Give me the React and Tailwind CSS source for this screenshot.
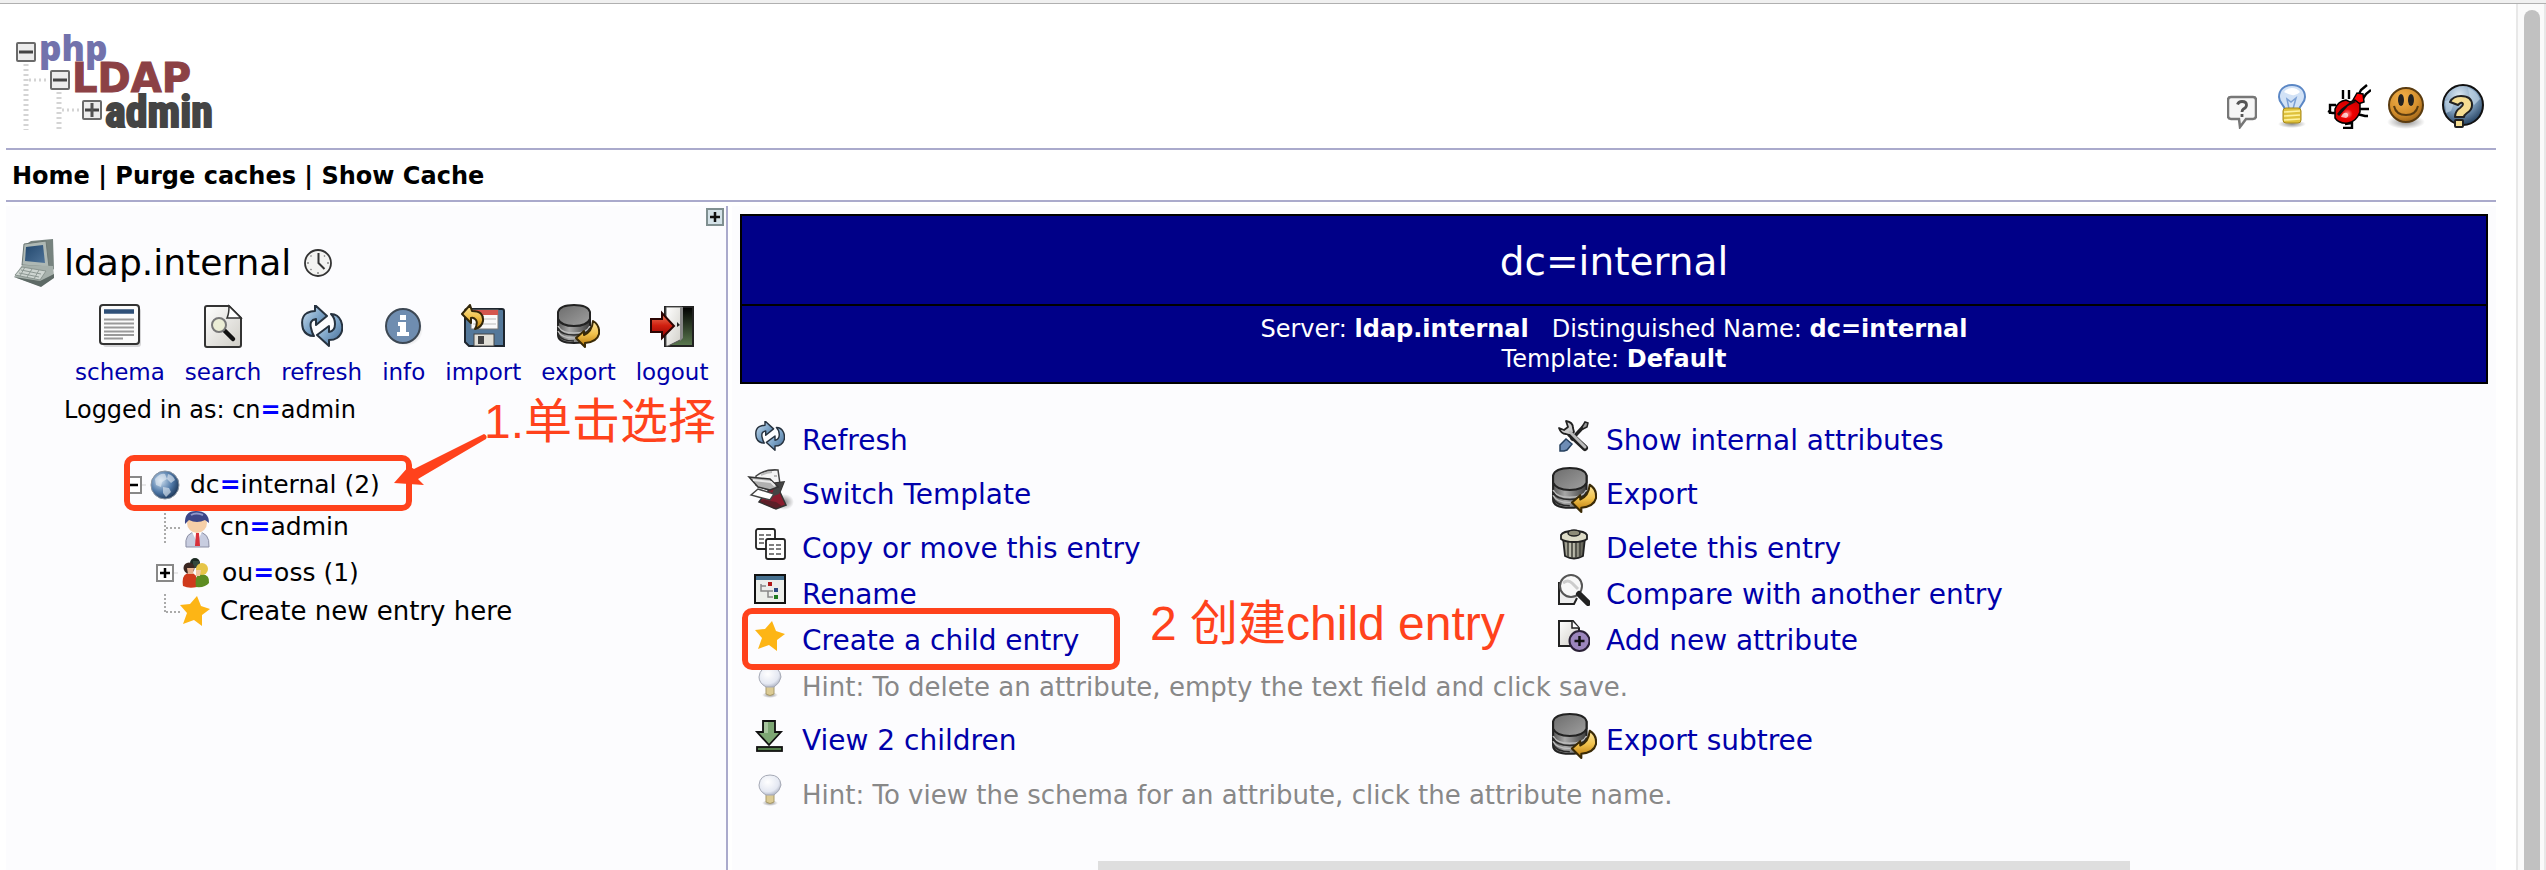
import React from 'react';

const LINK = 'text-[#0000aa]';

function Defs() {
  return (
    <svg className="absolute h-0 w-0" aria-hidden="true">
      <defs>
        <linearGradient id="steel" x1="0" y1="0" x2="1" y2="1">
          <stop offset="0" stopColor="#d3e4f2" />
          <stop offset="0.5" stopColor="#7fa6c9" />
          <stop offset="1" stopColor="#3f6690" />
        </linearGradient>
        <linearGradient id="gold" x1="0" y1="0" x2="0" y2="1">
          <stop offset="0" stopColor="#fbe6a0" />
          <stop offset="0.5" stopColor="#f1c24c" />
          <stop offset="1" stopColor="#b87608" />
        </linearGradient>
        <linearGradient id="drum" x1="0" y1="0" x2="1" y2="0">
          <stop offset="0" stopColor="#555" />
          <stop offset="0.35" stopColor="#a8a8a8" />
          <stop offset="1" stopColor="#3c3c3c" />
        </linearGradient>
        <linearGradient id="lid" x1="0" y1="0" x2="1" y2="1">
          <stop offset="0" stopColor="#6c6c6c" />
          <stop offset="1" stopColor="#a0a0a0" />
        </linearGradient>
        <linearGradient id="paper" x1="0" y1="0" x2="1" y2="1">
          <stop offset="0" stopColor="#ffffff" />
          <stop offset="1" stopColor="#cfcdc6" />
        </linearGradient>
        <linearGradient id="red" x1="0" y1="0" x2="0" y2="1">
          <stop offset="0" stopColor="#f08060" />
          <stop offset="0.5" stopColor="#d02010" />
          <stop offset="1" stopColor="#900000" />
        </linearGradient>
        <linearGradient id="room" x1="0" y1="0" x2="0" y2="1">
          <stop offset="0" stopColor="#000" />
          <stop offset="1" stopColor="#5c7a50" />
        </linearGradient>
        <linearGradient id="screen" x1="0" y1="0" x2="1" y2="1">
          <stop offset="0" stopColor="#23486e" />
          <stop offset="1" stopColor="#4f7398" />
        </linearGradient>
        <linearGradient id="metal" x1="0" y1="0" x2="1" y2="0">
          <stop offset="0" stopColor="#8a8a7c" />
          <stop offset="0.4" stopColor="#c8c8b8" />
          <stop offset="1" stopColor="#4a4a40" />
        </linearGradient>
        <radialGradient id="globe" cx="0.35" cy="0.35" r="0.75">
          <stop offset="0" stopColor="#cfe0f0" />
          <stop offset="0.55" stopColor="#5079a8" />
          <stop offset="1" stopColor="#142c4c" />
        </radialGradient>
        <radialGradient id="orb" cx="0.4" cy="0.25" r="0.85">
          <stop offset="0" stopColor="#dbe8f2" />
          <stop offset="0.5" stopColor="#7f9fbd" />
          <stop offset="1" stopColor="#0e2a4a" />
        </radialGradient>
        <radialGradient id="smile" cx="0.4" cy="0.3" r="0.8">
          <stop offset="0" stopColor="#f4b14a" />
          <stop offset="0.6" stopColor="#d38e2c" />
          <stop offset="1" stopColor="#8c5510" />
        </radialGradient>
        <radialGradient id="shade" cx="0.5" cy="0.5" r="0.5">
          <stop offset="0" stopColor="#000" stopOpacity="0.45" />
          <stop offset="1" stopColor="#000" stopOpacity="0" />
        </radialGradient>
        <radialGradient id="glass" cx="0.4" cy="0.35" r="0.7">
          <stop offset="0" stopColor="#ffffff" />
          <stop offset="0.7" stopColor="#e4e8f2" />
          <stop offset="1" stopColor="#aab0c0" />
        </radialGradient>
        <radialGradient id="bug" cx="0.5" cy="0.6" r="0.6">
          <stop offset="0" stopColor="#ff8080" />
          <stop offset="0.35" stopColor="#f00000" />
          <stop offset="1" stopColor="#d00000" />
        </radialGradient>
      </defs>
    </svg>
  );
}

function Logo() {
  const box = (x, y, plus) => (
    <g>
      <rect x={x} y={y} width="18" height="18" rx="1" fill="#ececec" stroke="#6a6a6a" strokeWidth="2" />
      <path d={`M${x + 2} ${y + 9}h14`} stroke="#444" strokeWidth="3" />
      {plus && <path d={`M${x + 9} ${y + 2}v14`} stroke="#555" strokeWidth="3" />}
    </g>
  );
  return (
    <svg width="210" height="126" viewBox="0 -14 210 126" role="img" aria-label="phpLDAPadmin">
      <g stroke="#d4d4d4" fill="none">
        <path d="M15 32v66M48 60v38" strokeWidth="5" strokeDasharray="2 3" />
        <path d="M18 48h20M51 78h18" strokeWidth="3" strokeDasharray="2 3" />
      </g>
      <text x="28" y="29" fontFamily="Open Sans, sans-serif" fontWeight="800" fontSize="35" fill="#7272ac">php</text>
      <text x="61" y="60" fontFamily="DejaVu Sans, sans-serif" fontWeight="700" fontSize="40" fill="#8c4145" stroke="#8c4145">LDAP</text>
      <text x="94" y="95" fontFamily="Liberation Sans Narrow, Roboto Condensed, DejaVu Sans Condensed, sans-serif" fontWeight="700" fontSize="44" fill="#444" stroke="#444" strokeWidth="2">admin</text>
      {box(6, 11)}
      {box(40, 39)}
      {box(72, 69, true)}
    </svg>
  );
}

const BubbleIcon = () => (
  <svg width="30" height="34" viewBox="0 0 30 34">
    <path d="M4 2h22q3 0 3 3v16q0 3-3 3h-7l-6 8-1-8H4q-3 0-3-3V5q0-3 3-3z" fill="#f6f6f6" stroke="#777" strokeWidth="2.500" />
    <path d="M10.500 9.500q1-3 4.500-3 4.500 0 4.500 3.500 0 2.500-3 4-1.500 1-1.500 3M15 19v3" fill="none" stroke="#555" strokeWidth="2.800" />
  </svg>
);
const LightIcon = () => (
  <svg width="38" height="46" viewBox="0 0 38 46">
    <ellipse cx="19" cy="41" rx="14" ry="4" fill="url(#shade)" />
    <path d="M19 2C11 2 6 7 6 14c0 6 5 7 6 13h14c1-6 6-7 6-13 0-7-5-12-13-12z" fill="#d2e2f6" stroke="#5b87c5" strokeWidth="2" />
    <path d="M11 9q3-4 8-4t8 4q-4 4-8 3t-8-3z" fill="#fff" />
    <path d="M16 26l-2-10 4 3 5-4-3 11" fill="none" stroke="#7b9fd4" strokeWidth="1.500" />
    <rect x="10" y="25" width="18" height="15" rx="3" fill="#dfc23c" stroke="#a5871a" />
    <path d="M11 29l16-1M11 33l16-1M11 37l16-1" stroke="#fff3a0" strokeWidth="1.500" />
  </svg>
);
const BugIcon = () => (
  <svg width="44" height="46" viewBox="0 0 44 46">
    <g stroke="#000" strokeWidth="2.400" fill="none">
      <path d="M31 13l3-6 6-5M35 17l4-6 5-4M22 16V7M16 16V7M9 22H3v9M10 30H5l-4-2M32 26h10M30 31l8 2h3M18 41l7-1v5h-9" />
    </g>
    <path d="M26 17l4-7 6 1 1 8-6 2-6 4z" fill="#f00" stroke="#000" strokeWidth="1.500" />
    <path d="M8 26q3-8 11-9l4 2 5-2 5 4v8q-4 10-12 11-9 1-13-5z" fill="url(#bug)" stroke="#000" strokeWidth="1.500" />
    <path d="M10 31l4-5L26 17l3 2-8 4-9 10z" fill="#111" />
    <path d="M14 34q2-5 6-4 3 3-1 5z" fill="#fff" opacity="0.7" />
  </svg>
);
const SmileIcon = () => (
  <svg width="38" height="43" viewBox="0 0 38 43">
    <ellipse cx="19" cy="36" rx="19" ry="7" fill="url(#shade)" />
    <circle cx="19" cy="19" r="17" fill="url(#smile)" stroke="#5b3c10" strokeWidth="2" />
    <ellipse cx="14" cy="14" rx="3" ry="6" fill="#222" />
    <ellipse cx="24" cy="14" rx="3" ry="6" fill="#222" />
    <path d="M7 20q2 9 12 9t12-9" fill="none" stroke="#5b3c10" strokeWidth="2" />
  </svg>
);
const HelpIcon = () => (
  <svg width="44" height="46" viewBox="0 0 44 46">
    <circle cx="22" cy="22" r="20" fill="url(#orb)" stroke="#111" strokeWidth="2" />
    <path d="M27 5q9 3 12 11l-6 6-4-6zM4 18q6-2 9 2l-3 8-5 2z" fill="#c7dae9" opacity="0.6" />
    <path d="M9 19q3-6 11-6 11 0 11 9 0 5-5 8-3 2-3 4h-9q0-6 5-9 3-2 3-4-1-3-5 1z" fill="#f5dd92" stroke="#222" strokeWidth="2" strokeLinejoin="round" />
    <rect x="14" y="37" width="8" height="7" rx="1" fill="#f5dd92" stroke="#222" strokeWidth="2" />
  </svg>
);

const ComputerIcon = () => (
  <svg width="42" height="48" viewBox="0 0 42 48">
    <path d="M12 6l6-4 22-2 1 30-6 5z" fill="#77837f" />
    <path d="M11 5l22-3 3 26-27-2z" fill="#aeb8b4" stroke="#6d7875" />
    <path d="M13 8l17-2 2 18-20-2z" fill="url(#screen)" />
    <path d="M9 26l31 1 1 10-14 10L1 38z" fill="#a6b0ab" />
    <path d="M9 28l24 4-6 9L2 36z" fill="#cdd4d0" stroke="#8a9590" />
    <path d="M8 31l20 4M6 34l20 4M12 28l-5 9M19 30l-5 8M26 31l-5 9" stroke="#8d9893" fill="none" />
    <path d="M1 38l26 4 14-7v4L28 48z" fill="#5e6a66" />
  </svg>
);
const ClockIcon = () => (
  <svg width="28" height="28" viewBox="0 0 28 28">
    <circle cx="14" cy="14" r="13" fill="#f3f3f1" stroke="#333" strokeWidth="1.800" />
    <path d="M14.500 4v10l6 6" fill="none" stroke="#333" strokeWidth="2" />
    <path d="M14 23v2M3 14h2M23 14h2M6.500 6.500l1 1M21 6.500l-1 1M6.500 21l1-1" stroke="#888" strokeWidth="1.500" />
  </svg>
);

const SchemaIcon = () => (
  <svg width="42" height="44" viewBox="0 0 42 44">
    <rect x="4" y="4" width="38" height="39" rx="3" fill="#000" opacity="0.15" />
    <rect x="1" y="1" width="39" height="39" rx="3" fill="#fbfbfb" stroke="#333" strokeWidth="2" />
    <path d="M5 7.500h30" stroke="#2f5078" strokeWidth="4.500" />
    <path d="M5 15.500h30M5 19.500h30M5 23.500h30M5 27.500h30M5 31h30M5 34.500h19" stroke="#999" strokeWidth="1.800" />
  </svg>
);
const SearchIcon = () => (
  <svg width="42" height="44" viewBox="0 0 42 44">
    <path d="M5 2h22l12 12v27q0 2-2 2H5q-2 0-2-2V4q0-2 2-2z" fill="url(#paper)" stroke="#333" strokeWidth="2" />
    <path d="M27 2q0 8-2 12h14z" fill="#fff" stroke="#333" strokeWidth="1.500" />
    <path d="M22 26l9 9" stroke="#111" strokeWidth="4.500" strokeLinecap="round" />
    <circle cx="17" cy="21" r="7" fill="#ebedd5" stroke="#777" strokeWidth="2" />
  </svg>
);
const RefreshIcon = ({ size = 42 }) => (
  <svg width={size} height={size} viewBox="0 0 42 42">
    <path d="M14 0l12 11-11 9v-6q-7 1-5 9 1 5 3 8-8 0-11-7Q-1 12 6 8q4-2 8-2z" fill="url(#steel)" stroke="#26323f" strokeWidth="2" strokeLinejoin="round" />
    <path d="M28 41L16 30l12-9v6q6-1 6-8 0-6-4-10 7 0 10 7 4 11-4 17-3 2-8 2z" fill="url(#steel)" stroke="#26323f" strokeWidth="2" strokeLinejoin="round" />
  </svg>
);
const InfoIcon = () => (
  <svg width="38" height="44" viewBox="0 0 38 44">
    <ellipse cx="21" cy="26" rx="17" ry="16" fill="url(#shade)" />
    <circle cx="18" cy="22" r="17" fill="#6f8db0" stroke="#3d4854" strokeWidth="2" />
    <path d="M15 11h6v5h-6zM13 18h8v10h3v4H12v-4h3v-6h-2z" fill="#fff" />
  </svg>
);
const ImportIcon = () => (
  <svg width="44" height="44" viewBox="0 0 44 44">
    <path d="M6 5h35q2 0 2 2v35H8l-4-4V7q0-2 2-2z" fill="#54789a" stroke="#1d252e" strokeWidth="2" />
    <rect x="10" y="6" width="27" height="19" fill="#fafafa" stroke="#777" />
    <path d="M10 8.500h27" stroke="#d4574f" strokeWidth="5" />
    <path d="M12 15h23M12 20h23" stroke="#bbb" />
    <rect x="13" y="30" width="20" height="12" fill="#e2e0d8" stroke="#444" />
    <rect x="17" y="32" width="6" height="8" fill="#444" />
    <path d="M1 10L9 1l2 6q12 0 11 10-1 6-8 8 3-6 1-9t-5-2v5z" fill="url(#gold)" stroke="#33270a" strokeWidth="2" strokeLinejoin="round" />
  </svg>
);
const ExportIcon = ({ size = 44 }) => (
  <svg width={size} height={size} viewBox="0 0 44 44">
    <path d="M2 9v22q0 8 16 8t16-8V9z" fill="url(#drum)" stroke="#222" strokeWidth="2" />
    <path d="M2 22q3 7 16 7t16-7M2 27q3 7 16 7t16-7" fill="none" stroke="#bdbdbd" strokeWidth="1.500" />
    <path d="M2 24q3 7 16 7t16-7M2 30q3 7 16 7" fill="none" stroke="#2a2a2a" strokeWidth="1.500" />
    <path d="M2 8q2-7 16-7t16 7v7q-3 7-16 7T2 15z" fill="url(#lid)" stroke="#222" strokeWidth="2" />
    <path d="M20 34l8-7v4q8-3 9-14 7 4 6 13-2 8-14 9v4z" fill="url(#gold)" stroke="#3a2a06" strokeWidth="2" strokeLinejoin="round" />
  </svg>
);
const LogoutIcon = () => (
  <svg width="44" height="44" viewBox="0 0 44 44">
    <rect x="15" y="3" width="28" height="39" fill="url(#room)" stroke="#222" strokeWidth="2" />
    <path d="M16 3h16v32l-14 7h-2z" fill="url(#paper)" stroke="#555" />
    <path d="M30 3v34l3-3V3z" fill="#888" />
    <path d="M27 18v5l3-2z" fill="#222" />
    <path d="M1 15h11V9l12 13-12 12v-6H1z" fill="url(#red)" stroke="#2c0503" strokeWidth="2" />
  </svg>
);

const GlobeIcon = () => (
  <svg width="30" height="30" viewBox="0 0 30 30">
    <circle cx="15" cy="15" r="14" fill="url(#globe)" stroke="#8a94a0" />
    <path d="M5 9q5-6 10-5l2 5-5 3-1 5-5-2zM18 4q5 1 7 6l-4 3-4-4zM13 17l6 1 2 4-5 5-3-4z" fill="#e7eef5" opacity="0.6" />
  </svg>
);
const PersonIcon = () => (
  <svg width="26" height="38" viewBox="0 0 26 38">
    <path d="M2 37q-2-15 11-15t12 15z" fill="#c8cde0" stroke="#8c8fa5" />
    <path d="M8 22h10l-5 10z" fill="#fff" />
    <path d="M12 23h3l1 13h-5z" fill="#d8303a" />
    <circle cx="13" cy="13" r="10" fill="#f6cfa8" />
    <path d="M1 14Q0 1 12 1q13 0 13 12l-4-3q-8 4-16 0z" fill="#3c4688" />
    <path d="M7 5q5-3 12 0" stroke="#8f97c8" strokeWidth="2" fill="none" />
  </svg>
);
const GroupIcon = () => (
  <svg width="28" height="30" viewBox="0 0 28 30">
    <circle cx="13" cy="5" r="5" fill="#1c2a22" />
    <path d="M11 3h6v6h-6z" fill="#33483c" />
    <path d="M1 28q-2-13 7-13t7 14q-8 2-14-1z" fill="#cf3a1c" />
    <path d="M14 29q-2-13 6-13 8 1 7 9-4 5-13 4z" fill="#5d8c22" />
    <circle cx="7" cy="10" r="5.500" fill="#3a2620" />
    <path d="M5 10h7l-1 6H6z" fill="#e5b090" />
    <circle cx="20" cy="11" r="6" fill="#e6c548" />
    <path d="M14 12h5l-1 6h-4z" fill="#f2c9a2" />
  </svg>
);
const StarIcon = () => (
  <svg width="30" height="30" viewBox="0 0 30 30">
    <path d="M17 0l4 10 9 3-8 6 0 11-8-6-11 4 4-11-7-8 10-1z" fill="#fdb515" />
  </svg>
);
const BulbIcon = () => (
  <svg width="24" height="32" viewBox="0 0 24 32">
    <ellipse cx="12" cy="29" rx="8" ry="3" fill="url(#shade)" />
    <path d="M8 20h8v8q-4 3-8 0z" fill="#dccb94" stroke="#a89a6c" />
    <path d="M12 1q10 0 11 10-1 6-7 10H8Q1 17 1 11 2 1 12 1z" fill="url(#glass)" stroke="#a5a9b5" />
  </svg>
);
const TemplateIcon = () => (
  <svg width="48" height="44" viewBox="0 0 48 44">
    <ellipse cx="38" cy="34" rx="10" ry="8" fill="url(#shade)" />
    <path d="M10 8q9-7 22-6l2 14-6 8-18-7z" fill="#f4f4f4" stroke="#444" strokeWidth="1.500" />
    <path d="M15 7q6-3 11-3M28 8h3" stroke="#bbb" strokeWidth="2" fill="none" />
    <path d="M29 15l9-1-4 10 6 13-10 4-17-7 3-4z" fill="#8a1c2e" stroke="#333" strokeWidth="1.500" />
    <path d="M30 15l8-1-5 12-8 3z" fill="#444" />
    <path d="M3 9l21 2 8 8-8 3L12 19z" fill="#b0b0b0" stroke="#333" strokeWidth="1.500" />
    <path d="M7 12l18 2 4 4" fill="none" stroke="#e8e8e8" strokeWidth="2" />
    <path d="M5 27l7-6 16 5-4 6-8-2z" fill="#fff" stroke="#444" strokeWidth="1.500" />
    <path d="M13 33l6-1 11 2 6 4-8 3z" fill="#3d2025" opacity="0.6" />
  </svg>
);
const CopyIcon = () => (
  <svg width="32" height="32" viewBox="0 0 32 32">
    <rect x="2" y="1" width="19" height="20" rx="2" fill="#fff" stroke="#222" strokeWidth="1.800" />
    <path d="M5 7h5M12 7h5M5 11h5M5 15h5" stroke="#555" strokeWidth="1.500" />
    <rect x="12" y="11" width="19" height="20" rx="2" fill="#fff" stroke="#222" strokeWidth="1.800" />
    <path d="M15 17h5M22 17h5M15 21h5M22 21h5M15 26h5M22 26h5" stroke="#555" strokeWidth="1.500" />
  </svg>
);
const RenameIcon = () => (
  <svg width="32" height="32" viewBox="0 0 32 32">
    <rect x="1" y="1" width="30" height="28" fill="#eceeea" stroke="#111" strokeWidth="2" />
    <path d="M2 4h28" stroke="#46708f" strokeWidth="4" />
    <path d="M7 10v7h7v6h5M14 17h5M7 12h5" stroke="#888" strokeWidth="1.500" fill="none" />
    <rect x="14" y="8" width="4" height="4" fill="#b01818" />
    <rect x="20" y="14" width="4" height="4" fill="#2c4a80" />
    <rect x="20" y="21" width="4" height="4" fill="#1d7a1d" />
  </svg>
);
const DownIcon = () => (
  <svg width="32" height="32" viewBox="0 0 32 32">
    <path d="M9 1h12v11h6L15 25 3 12h6z" fill="#7da673" stroke="#111" strokeWidth="1.800" />
    <path d="M10 2h4v11h-4z" fill="#b9d3b0" opacity="0.7" />
    <rect x="3" y="27" width="25" height="4" fill="#55804c" stroke="#111" strokeWidth="1.800" />
  </svg>
);
const ToolsIcon = () => (
  <svg width="32" height="32" viewBox="0 0 32 32">
    <path d="M13 20L26 6" stroke="#222" strokeWidth="3.500" />
    <path d="M24 7l3-5 3 1-1 4-4 2z" fill="#999" stroke="#222" strokeWidth="1.500" />
    <path d="M2 31v-6l6-6 6 5-5 6-3 1z" fill="#6d8cb5" stroke="#26405f" strokeWidth="1.500" />
    <path d="M12 14l15 14" stroke="#222" strokeWidth="6" strokeLinecap="round" />
    <path d="M8 1q7 1 7 7l1 4-4 3-4-1q-5 0-7-6l5 2 4-3z" fill="#ccc" stroke="#222" strokeWidth="1.800" strokeLinejoin="round" />
    <path d="M12 12l15 15" stroke="#bbb" strokeWidth="3" strokeLinecap="round" />
  </svg>
);
const TrashIcon = () => (
  <svg width="32" height="32" viewBox="0 0 32 32">
    <path d="M5 10h22l-2 18q-9 5-18 0z" fill="url(#metal)" stroke="#222" strokeWidth="1.800" />
    <path d="M10 14v15M14 14v16M18 14v16M22 14v15" stroke="#44443c" strokeWidth="1.600" />
    <path d="M3 7q2-4 13-4t13 4v4q-4 3-13 3T3 11z" fill="#dedcc8" stroke="#222" strokeWidth="1.800" />
    <ellipse cx="16" cy="5" rx="6" ry="3" fill="#8e8c78" stroke="#222" strokeWidth="1.500" />
  </svg>
);
const CompareIcon = () => (
  <svg width="32" height="32" viewBox="0 0 32 32">
    <path d="M1 8v22h15l3-6" fill="#eee" stroke="#222" strokeWidth="2" />
    <circle cx="13" cy="12" r="11" fill="#f8f8f8" stroke="#555" strokeWidth="2" />
    <path d="M5 9q5-4 9 0t6 6" stroke="#ccc" strokeWidth="3" fill="none" />
    <path d="M21 20l9 9" stroke="#222" strokeWidth="6" strokeLinecap="round" />
  </svg>
);
const AddIcon = () => (
  <svg width="32" height="32" viewBox="0 0 32 32">
    <path d="M1 1h14l6 7v18H1z" fill="url(#paper)" stroke="#222" strokeWidth="2" />
    <path d="M14 1v7h7" fill="#fff" stroke="#222" strokeWidth="1.500" />
    <circle cx="21.500" cy="21" r="10" fill="#9c86bd" stroke="#2a2036" strokeWidth="2" />
    <path d="M21.500 16v10M16.500 21h10" stroke="#111" strokeWidth="2.500" />
  </svg>
);

const Eq = () => <span className="font-bold text-[#0000ff]">=</span>;

const TOOLS = [
  ['schema', SchemaIcon],
  ['search', SearchIcon],
  ['refresh', RefreshIcon],
  ['info', InfoIcon],
  ['import', ImportIcon],
  ['export', ExportIcon],
  ['logout', LogoutIcon],
];

function Toggle({ plus, label }) {
  return (
    <button aria-label={label} className="block h-[18px] w-[18px]">
      <svg width="18" height="18" viewBox="0 0 18 18">
        <rect x="1" y="1" width="16" height="16" fill="#fff" stroke="#888" strokeWidth="2" />
        <path d={plus ? 'M4 9h10M9 4v10' : 'M4 9h10'} stroke="#000" strokeWidth="2.500" />
      </svg>
    </button>
  );
}

function Branch({ d, height, className }) {
  return (
    <svg width="16" height={height} viewBox={`0 0 16 ${height}`} className={className}>
      <path d={d} stroke="#aaa" strokeWidth="2" strokeDasharray="2 2" fill="none" />
    </svg>
  );
}

function Tree() {
  return (
    <ul className="pl-[118px] text-[25px] leading-[26px]">
      <li className="flex h-[42px] items-center">
        <Toggle label="Collapse dc=internal" />
        <Branch height={4} d="M1 2h6" className="w-2" />
        <GlobeIcon />
        <a href="#dc" className="ml-[10px] whitespace-pre">dc<Eq />internal (2)</a>
      </li>
      <li className="flex h-[42px] items-center pl-10">
        <Branch height={36} d="M1 0v36M2 19h14" />
        <span className="ml-[4px] pt-[4px]"><PersonIcon /></span>
        <a href="#admin" className="ml-[10px]">cn<Eq />admin</a>
      </li>
      <li className="flex h-[50px] items-center pl-8">
        <Toggle plus label="Expand ou=oss" />
        <Branch height={4} d="M1 2h6" className="w-2" />
        <GroupIcon />
        <a href="#oss" className="ml-[12px]">ou<Eq />oss (1)</a>
      </li>
      <li className="flex h-[26px] items-center pl-10">
        <Branch height={34} d="M1 0v18M2 18h14" />
        <StarIcon />
        <a href="#new" className="ml-[10px] text-[26px]">Create new entry here</a>
      </li>
    </ul>
  );
}

function Sidebar() {
  return (
    <aside className="w-[722px] shrink-0 border-r-2 border-[#aaaacc] bg-[#fcfcfe]">
      <div className="flex justify-end pt-[2px] pr-[2px]">
        <button aria-label="Expand all" className="flex h-[18px] w-[18px] border-2 border-[#7f8f90] bg-[#d4e2e8]">
          <svg width="14" height="14" viewBox="0 0 14 14">
            <path d="M2 7h10M7 2v10" stroke="#111" strokeWidth="2.500" />
          </svg>
        </button>
      </div>
      <div className="flex h-[74px] items-center pl-[7px]">
        <ComputerIcon />
        <h2 className="ml-[9px] text-[36px] leading-[44px]">ldap.internal</h2>
        <span className="ml-[13px]"><ClockIcon /></span>
      </div>
      <nav className="flex gap-[20px] pl-[69px]">
        {TOOLS.map(([name, Icon]) => (
          <a key={name} href={`#${name}`} className={`flex flex-col items-center text-[23px] leading-[32px] ${LINK}`}>
            <span className="flex h-[56px] items-center pb-[4px]"><Icon /></span>
            {name}
          </a>
        ))}
      </nav>
      <p className="pt-[6px] pl-[58px] text-[24px] leading-[32px]">
        Logged in as: cn<Eq />admin
      </p>
      <div className="pt-[38px]">
        <Tree />
      </div>
    </aside>
  );
}

function Item({ icon, tall, hint, children }) {
  return (
    <div className={`flex items-start ${tall ? 'h-[54px]' : 'h-[46px]'} ${hint ? 'col-span-2' : ''}`}>
      <span className="flex h-[38px] w-[62px] shrink-0 items-center justify-center pr-[2px]">{icon}</span>
      {hint ? (
        <span className="text-[26px] leading-[48px] text-[#888888]">{children}</span>
      ) : (
        <a href="#action" className={`text-[28px] leading-[48px] ${LINK}`}>{children}</a>
      )}
    </div>
  );
}

function Main() {
  return (
    <main className="min-w-0 flex-1 bg-[#fcfcfe] px-2 pt-2">
      <header className="border-2 border-black bg-[#000088] text-center text-white">
        <h1 className="border-b-2 border-black pt-[4px] text-[39px] leading-[84px]">dc=internal</h1>
        <p className="pt-[8px] pb-[8px] text-[24px] leading-[30px]">
          Server: <b>ldap.internal</b> &nbsp; Distinguished Name: <b>dc=internal</b>
          <br />
          Template: <b>Default</b>
        </p>
      </header>
      <section className="grid grid-cols-[46%_54%] pt-[33px]">
        <Item tall icon={<RefreshIcon size={30} />}>Refresh</Item>
        <Item tall icon={<ToolsIcon />}>Show internal attributes</Item>
        <Item tall icon={<TemplateIcon />}>Switch Template</Item>
        <Item tall icon={<ExportIcon size={46} />}>Export</Item>
        <Item icon={<CopyIcon />}>Copy or move this entry</Item>
        <Item icon={<TrashIcon />}>Delete this entry</Item>
        <Item icon={<RenameIcon />}>Rename</Item>
        <Item icon={<CompareIcon />}>Compare with another entry</Item>
        <div className="relative">
          <Item icon={<StarIcon />}>Create a child entry</Item>
          <div className="pointer-events-none absolute -top-[9px] left-[2px] h-[62px] w-[378px] rounded-[10px] border-6 border-[#ff421c]" />
          <Note className="top-[-25px] left-[410px]">2 创建child entry</Note>
        </div>
        <Item icon={<AddIcon />}>Add new attribute</Item>
        <Item tall hint icon={<BulbIcon />}>Hint: To delete an attribute, empty the text field and click save.</Item>
        <Item tall icon={<DownIcon />}>View 2 children</Item>
        <Item tall icon={<ExportIcon size={46} />}>Export subtree</Item>
        <Item hint icon={<BulbIcon />}>Hint: To view the schema for an attribute, click the attribute name.</Item>
      </section>
      <div className="mx-auto mt-11 h-[9px] w-[59%] bg-[#dedede]" />
    </main>
  );
}

function Note({ className, children }) {
  return (
    <span className={`pointer-events-none absolute whitespace-nowrap font-['Liberation_Sans','Noto_Sans_CJK_SC',sans-serif] text-[48px] leading-[64px] text-[#ff421c] ${className}`}>
      {children}
    </span>
  );
}

export default function App() {
  return (
    <div className="relative flex min-h-screen flex-col bg-white font-['DejaVu_Sans',Verdana,sans-serif] text-black">
      <Defs />
      <div className="h-1 border-b border-[#b0b0b0] bg-[#f0f0f0]" />
      <div className="flex flex-1">
        <div className="flex min-w-0 flex-1 flex-col pr-5 pl-[6px]">
          <div className="flex h-[146px] items-end justify-between border-b-2 border-[#aaaacc] pr-[11px] pb-[4px] pl-[5px]">
            <Logo />
            <div className="flex items-end gap-4 pb-[15px]">
              <button aria-label="Ask"><BubbleIcon /></button>
              <button aria-label="Light"><LightIcon /></button>
              <button aria-label="Bug"><BugIcon /></button>
              <button aria-label="Donate"><SmileIcon /></button>
              <button aria-label="Help"><HelpIcon /></button>
            </div>
          </div>
          <nav className="border-b-2 border-[#aaaacc] pt-[2px] pl-[6px] text-[24px] leading-[48px] font-bold">
            <a href="#home">Home</a> | <a href="#purge">Purge caches</a> | <a href="#cache">Show Cache</a>
          </nav>
          <div className="relative flex flex-1 gap-1 pt-1">
            <Sidebar />
            <Main />
            <div className="pointer-events-none absolute top-[253px] left-[118px] h-[56px] w-[288px] rounded-[10px] border-6 border-[#ff421c]" />
            <svg width="96" height="52" viewBox="0 0 96 52" className="pointer-events-none absolute top-[232px] left-[387px]">
              <path d="M91 0q4 2 2 5L30 42l-5 3 6 6L1 49 16 32l5 3z" fill="#ff421c" />
            </svg>
            <Note className="top-[188px] left-[478px]">1.单击选择</Note>
          </div>
        </div>
        <div className="flex w-[30px] border-r-2 border-l-2 border-[#e8e8e8] bg-[#fafafa] pt-[6px] pl-[6px]">
          <div className="w-4 rounded-t-full bg-[#c1c1c1]" />
        </div>
      </div>
    </div>
  );
}
